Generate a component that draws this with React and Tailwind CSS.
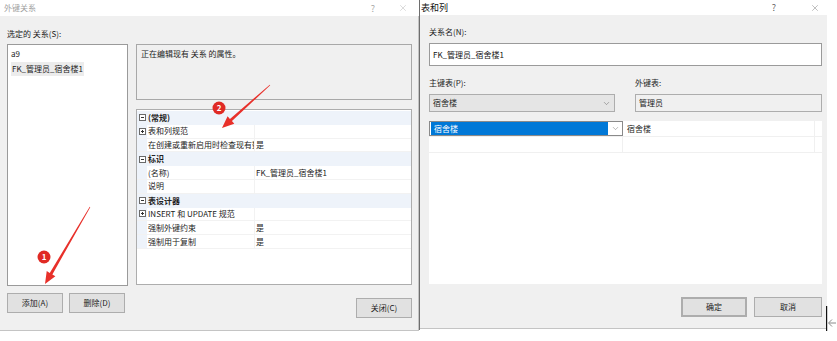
import { X, ChevronDown } from 'lucide-react';

const font = { fontFamily: '"Noto Sans CJK SC", "Liberation Sans", sans-serif' };

// 属性网格的行
const props = [
  { cat: true, name: '(常规)' },
  { name: '表和列规范', plus: true, value: '' },
  { name: '在创建或重新启用时检查现有数据', value: '是' },
  { cat: true, name: '标识' },
  { name: '(名称)', value: 'FK_管理员_宿舍楼1' },
  { name: '说明', value: '' },
  { cat: true, name: '表设计器' },
  { name: 'INSERT 和 UPDATE 规范', plus: true, value: '' },
  { name: '强制外键约束', value: '是' },
  { name: '强制用于复制', value: '是' },
];

function ToggleBox({ plus }) {
  return (
    <span className="relative block h-[7px] w-[7px] border border-[#6a6a6a] bg-white">
      <span className="absolute left-[1px] right-[1px] top-[2px] h-px bg-[#333]" />
      {plus && <span className="absolute bottom-[1px] top-[1px] left-[2px] w-px bg-[#333]" />}
    </span>
  );
}

function DlgButton({ children, className = '' }) {
  return (
    <button className={`flex h-[20px] items-center justify-center border border-[#adadad] bg-[#e1e1e1] text-[8px] text-[#222] ${className}`}>
      {children}
    </button>
  );
}

function TitleButtons({ gap, pr, color }) {
  return (
    <div className={`flex items-center ${gap} ${pr}`}>
      <span className={`w-[10px] text-center text-[9px] leading-none ${color}`}>?</span>
      <X className={`h-[10px] w-[10px] ${color}`} strokeWidth={1} />
    </div>
  );
}

function PropGrid() {
  return (
    <div className="h-[176px] w-[276px] border border-[#adadad] bg-white pt-px">
      {props.map((p, i) =>
        p.cat ? (
          <div key={i} className="flex h-[13.8px] items-center bg-[#eef3fa]">
            <div className="flex w-[10px] justify-center">
              <ToggleBox />
            </div>
            <span className="pl-px text-[8px] font-bold text-[#222]">{p.name}</span>
          </div>
        ) : (
          <div key={i} className="flex h-[13.8px] items-center border-b border-[#f2f2f2]">
            <div className="flex h-full w-[10px] items-center justify-center bg-[#eef3fa]">
              {p.plus && <ToggleBox plus />}
            </div>
            <span className="w-[107px] overflow-hidden whitespace-nowrap pl-px text-[8px] text-[#222]">{p.name}</span>
            <span className="flex h-full flex-1 items-center border-l border-[#f2f2f2] pl-[1px] text-[8px] text-[#222]">{p.value}</span>
          </div>
        )
      )}
    </div>
  );
}

function Arrows() {
  return (
    <svg className="pointer-events-none absolute left-0 top-0" width="837" height="341" viewBox="0 0 837 341">
      <polygon
        fill="#e8302a"
        points="90.26,207.15 52.35,274.4 55.37,276.16 45,284 46.73,271.12 49.75,272.88 89.74,206.85"
      />
      <polygon
        fill="#e8302a"
        points="270.2,85.22 231.94,121.12 234.28,123.73 222,128 227.6,116.27 229.94,118.88 269.8,84.78"
      />
      <circle cx="44" cy="257" r="6.5" fill="#e02a24" />
      <text x="44" y="260" textAnchor="middle" fontSize="8" fontWeight="bold" fill="#fff" style={font}>1</text>
      <circle cx="219" cy="108" r="6.5" fill="#e02a24" />
      <text x="219" y="111" textAnchor="middle" fontSize="8" fontWeight="bold" fill="#fff" style={font}>2</text>
      {/* 鼠标指针 */}
      <rect x="826" y="306" width="1.2" height="25" fill="#111" />
      <path d="M836 323 H829 M832 319.5 L828.5 323 L832 326.5" stroke="#8a8a8a" strokeWidth="1" fill="none" />
    </svg>
  );
}

export default function App() {
  return (
    <div className="relative flex h-[341px] w-[837px] overflow-hidden bg-white" style={font}>
      {/* 外键关系 */}
      <div className="flex h-[331px] w-[419px] flex-col">
        <div className="flex h-[16px] items-center justify-between bg-white pl-[4px]">
          <span className="text-[8px] text-[#a0a0a0]">外键关系</span>
          <TitleButtons gap="gap-[20px]" pr="pr-[11px]" color="text-[#a8a8a8]" />
        </div>
        <div className="flex flex-1 gap-[8px] border-b border-r border-[#c4c4c4] bg-[#f0f0f0] pl-[7px] pt-[12px]">
          <div className="flex w-[121px] flex-col">
            <div className="flex h-[16px] items-start text-[8px] leading-[12px] text-[#222]">选定的 关系(S):</div>
            <div className="h-[242px] border border-[#9a9a9a] bg-white pt-px">
              <div className="flex h-[15px] items-center pl-[3px] text-[8px] text-[#222]">a9</div>
              <div className="flex h-[15px] items-center pl-[3px]">
                <span className="bg-[#ececec] px-px text-[8px] leading-[14px] text-[#222]">FK_管理员_宿舍楼1</span>
              </div>
            </div>
            <div className="mt-[7px] flex gap-[6px]">
              <DlgButton className="w-[56px]">添加(A)</DlgButton>
              <DlgButton className="w-[56px]">删除(D)</DlgButton>
            </div>
          </div>
          <div className="flex w-[276px] flex-col pt-[16px]">
            <div className="h-[56px] border border-[#a8a8a8] bg-[#f0f0f0] px-[4px] pt-[3px] text-[8px] leading-[12px] text-[#222]">
              正在编辑现有 关系 的属性。
            </div>
            <div className="mt-[9px]">
              <PropGrid />
            </div>
            <div className="mt-[13px] flex justify-end">
              <DlgButton className="w-[56px]">关闭(C)</DlgButton>
            </div>
          </div>
        </div>
      </div>

      <div className="h-[330px] w-px bg-[#6e6e6e]" />

      {/* 表和列 */}
      <div className="flex h-[329px] w-[407px] flex-col">
        <div className="flex h-[15px] items-center justify-between bg-white pl-px">
          <span className="text-[9px] leading-none text-[#111]">表和列</span>
          <TitleButtons gap="gap-[31px]" pr="pr-[7px]" color="text-[#666]" />
        </div>
        <div className="flex flex-1 flex-col border-b border-[#c4c4c4] bg-[#f0f0f0] pl-[9px] pr-[5px] pt-[11px]">
          <div className="h-[12px] text-[8px] leading-[12px] text-[#222]">关系名(N):</div>
          <div className="mt-[5px] flex h-[23px] items-center border border-[#9a9a9a] bg-white pl-[3px] text-[8px] text-[#111]">
            FK_管理员_宿舍楼1
          </div>
          <div className="mt-[11px] flex gap-[20px]">
            <div className="flex w-[186px] flex-col">
              <div className="h-[12px] text-[8px] leading-[12px] text-[#222]">主键表(P):</div>
              <div className="mt-[5px] flex h-[18px] items-center justify-between border border-[#adadad] bg-[#e5e5e5] pl-[3px] pr-[3px] text-[8px] text-[#222]">
                <span>宿舍楼</span>
                <ChevronDown className="h-[9px] w-[9px] text-[#555]" strokeWidth={1.2} />
              </div>
            </div>
            <div className="flex flex-1 flex-col">
              <div className="h-[12px] text-[8px] leading-[12px] text-[#222]">外键表:</div>
              <div className="mt-[5px] flex h-[18px] items-center border border-[#adadad] bg-[#f0f0f0] pl-[3px] text-[8px] text-[#222]">
                管理员
              </div>
            </div>
          </div>
          <div className="mt-[9px] h-[163px] bg-white">
            <div className="flex h-[16px] border-b border-[#f0f0f0]">
              <div className="flex w-[194px] items-center border border-[#8a8a8a] bg-white">
                <div className="ml-px flex h-[13px] w-[177px] items-center bg-[#0078d7] pl-[3px] text-[8px] text-white">宿舍楼</div>
                <div className="flex flex-1 items-center justify-center">
                  <ChevronDown className="h-[9px] w-[9px] text-[#666]" strokeWidth={1.2} />
                </div>
              </div>
              <div className="flex w-[192px] items-center border-r border-[#f0f0f0] pl-[4px] text-[8px] text-[#222]">宿舍楼</div>
            </div>
            <div className="flex h-[16px] border-b border-[#f0f0f0]">
              <div className="w-[194px] border-r border-[#f0f0f0]" />
              <div className="w-[192px] border-r border-[#f0f0f0]" />
            </div>
          </div>
          <div className="mt-[13px] flex justify-end gap-[7px]">
            <DlgButton className="w-[66px] border-2 border-[#0078d7]">确定</DlgButton>
            <DlgButton className="w-[68px]">取消</DlgButton>
          </div>
        </div>
      </div>

      <Arrows />
    </div>
  );
}
